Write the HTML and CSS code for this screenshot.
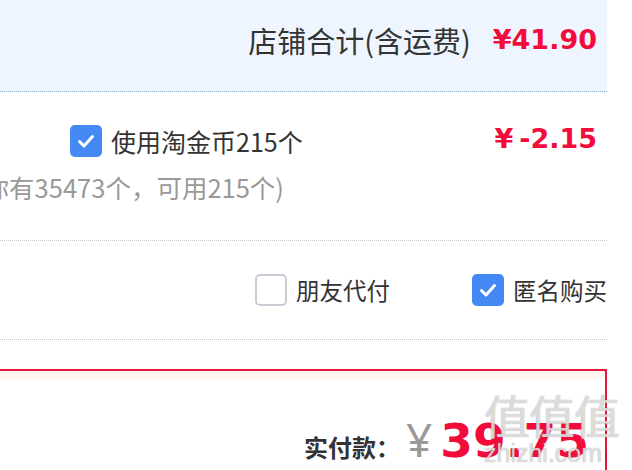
FILE: index.html
```html
<!DOCTYPE html>
<html lang="zh">
<head>
<meta charset="utf-8">
<link rel="stylesheet" href="styles.css">
</head>
<body>
<div class="page">
  <section class="shop-total">
    <span class="shop-label">店铺合计(含运费)</span>
    <span class="shop-price">¥41.90</span>
  </section>

  <section class="coin-row">
    <div class="coin-left">
      <div class="coin-line">
        <span class="cb cb-on"><svg viewBox="0 0 32 32" width="32" height="32"><path d="M9.5 16.5 L14 21 L22.5 11.5" fill="none" stroke="#fff" stroke-width="3" stroke-linecap="round" stroke-linejoin="round"/></svg></span>
        <span class="coin-text">使用淘金币215个</span>
      </div>
      <div class="coin-note">(你有35473个，可用215个)</div>
    </div>
    <div class="coin-price">¥<span class="minus">-2.15</span></div>
  </section>

  <section class="opt-row">
    <label class="opt">
      <span class="cb cb-off"></span>
      <span class="opt-text">朋友代付</span>
    </label>
    <label class="opt">
      <span class="cb cb-on"><svg viewBox="0 0 32 32" width="32" height="32"><path d="M9.5 16.5 L14 21 L22.5 11.5" fill="none" stroke="#fff" stroke-width="3" stroke-linecap="round" stroke-linejoin="round"/></svg></span>
      <span class="opt-text">匿名购买</span>
    </label>
  </section>

  <section class="pay-box">
    <span class="pay-label">实付款：</span>
    <span class="pay-yen">¥</span>
    <span class="pay-num">39.75</span>
  </section>
</div>
<div class="watermark" aria-hidden="true">
  <div class="wm-big">值值值</div>
  <div class="wm-small">zhizhi.com</div>
</div>
</body>
</html>
```

FILE: styles.css
```css
html, body {
  margin: 0;
  padding: 0;
  background: #fff;
  overflow: hidden;
  width: 632px;
  height: 470px;
}
body {
  font-family: "Noto Sans CJK SC", "Noto Sans", sans-serif;
  color: #333;
  position: relative;
}
.page {
  margin-left: -40px;
  width: 647px;
}
.shop-total {
  height: 92px;
  box-sizing: border-box;
  background: #eff5fe;
  border-bottom: 1px dotted #94aedb;
  display: flex;
  justify-content: flex-end;
  align-items: center;
  padding: 0 10px 12px 0;
}
.shop-label {
  font-size: 29px;
  color: #333;
}
.shop-price {
  font-family: "DejaVu Sans", sans-serif;
  font-weight: bold;
  font-size: 27px;
  color: #f20c3c;
  margin-left: 22px;
}
.coin-row {
  height: 149px;
  box-sizing: border-box;
  border-bottom: 1px dotted #c4c4c4;
  display: flex;
  justify-content: space-between;
  align-items: flex-start;
  padding: 33px 10px 0 0;
}
.coin-left {
  display: flex;
  flex-direction: column;
}
.coin-line {
  display: flex;
  align-items: center;
  margin-left: 110px;
  height: 32px;
}
.cb {
  width: 32px;
  height: 32px;
  box-sizing: border-box;
  border-radius: 5px;
  flex: none;
  display: block;
}
.cb svg { display: block; }
.cb-on {
  background: #4589f5;
}
.cb-off {
  border: 2px solid #c9ccd5;
  background: #fff;
}
.coin-text {
  font-size: 25px;
  margin-left: 9px;
  color: #333;
}
.coin-note {
  margin-top: 15px;
  line-height: 30px;
  font-size: 25.5px;
  color: #999;
  margin-left: 15px;
}
.coin-price {
  font-family: "DejaVu Sans", sans-serif;
  font-weight: bold;
  font-size: 27px;
  color: #f20c3c;
  line-height: 30px;
  margin-top: -1px;
}
.coin-price .minus {
  margin-left: 6px;
}
.opt-row {
  height: 99px;
  box-sizing: border-box;
  border-bottom: 1px dotted #c4c4c4;
  display: flex;
  justify-content: flex-end;
  align-items: center;
  gap: 82px;
}
.opt {
  display: flex;
  align-items: center;
}
.opt-text {
  font-size: 23.5px;
  margin-left: 9px;
  color: #333;
}
.pay-box {
  margin-top: 29px;
  width: 647px;
  height: 160px;
  box-sizing: border-box;
  border: 2px solid #e4143c;
  border-left: none;
  display: flex;
  justify-content: flex-end;
  align-items: baseline;
  padding: 37px 16px 0 0;
  background: linear-gradient(#fff4ef 0, #fff4ef 6px, #fff 10px);
}
.pay-label {
  font-size: 24px;
  font-weight: bold;
  color: #333;
}
.pay-yen {
  font-size: 46px;
  color: #999;
  margin-left: 6px;
  font-family: "Noto Sans", sans-serif;
}
.pay-num {
  font-family: "DejaVu Sans", sans-serif;
  font-weight: bold;
  font-size: 47px;
  color: #f20c3c;
  margin-left: 8px;
}
.watermark {
  position: absolute;
  left: 484px;
  top: 388px;
  width: 148px;
  color: rgba(255,255,255,0.7);
  text-shadow: 0 0 1px rgba(110,110,110,0.8);
  pointer-events: none;
}
.wm-big {
  font-size: 46px;
  line-height: 52px;
  letter-spacing: -1px;
  font-family: "Noto Sans CJK SC", sans-serif;
}
.wm-small {
  font-size: 25px;
  line-height: 26px;
  font-family: "Liberation Sans", sans-serif;
}
```
